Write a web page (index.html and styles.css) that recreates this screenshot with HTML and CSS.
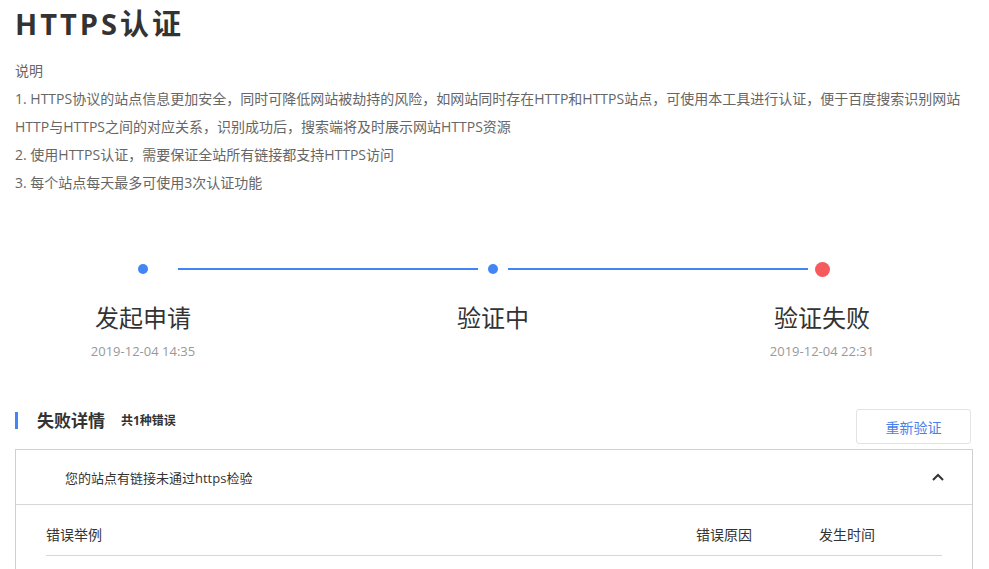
FILE: index.html
```html
<!DOCTYPE html>
<html lang="zh-CN">
<head>
<meta charset="utf-8">
<title>HTTPS认证</title>
<link rel="stylesheet" href="styles.css">
</head>
<body>
<div class="page">
  <h1 class="title">HTTPS认证</h1>
  <div class="desc">
    <p>说明</p>
    <p>1. HTTPS协议的站点信息更加安全，同时可降低网站被劫持的风险，如网站同时存在HTTP和HTTPS站点，可使用本工具进行认证，便于百度搜索识别网站HTTP与HTTPS之间的对应关系，识别成功后，搜索端将及时展示网站HTTPS资源</p>
    <p>2. 使用HTTPS认证，需要保证全站所有链接都支持HTTPS访问</p>
    <p>3. 每个站点每天最多可使用3次认证功能</p>
  </div>

  <div class="track">
    <span class="dot"></span>
    <span class="line line-1"></span>
    <span class="dot"></span>
    <span class="line line-2"></span>
    <span class="dot dot-fail"></span>
  </div>
  <div class="steps">
    <div class="step step-1">
      <div class="step-name">发起申请</div>
      <div class="step-time">2019-12-04 14:35</div>
    </div>
    <div class="step step-2">
      <div class="step-name">验证中</div>
      <div class="step-time"></div>
    </div>
    <div class="step step-3">
      <div class="step-name">验证失败</div>
      <div class="step-time">2019-12-04 22:31</div>
    </div>
  </div>

  <div class="section-head">
    <div class="section-title"><span class="st-main">失败详情</span><span class="st-sub">共1种错误</span></div>
    <button class="btn">重新验证</button>
  </div>

  <div class="panel">
    <div class="panel-head">
      <span class="panel-title">您的站点有链接未通过https检验</span>
      <svg class="chev" width="12" height="8" viewBox="0 0 12 8"><polyline points="1,7 6,2 11,7" fill="none" stroke="#333" stroke-width="2"/></svg>
    </div>
    <div class="panel-body">
      <div class="thead">
        <div class="col col-a">错误举例</div>
        <div class="col col-b">错误原因</div>
        <div class="col col-c">发生时间</div>
      </div>
    </div>
  </div>
</div>
</body>
</html>
```

FILE: styles.css
```css
html, body {
  margin: 0;
  padding: 0;
  background: #fff;
}
body {
  font-family: "Open Sans", "Noto Sans CJK SC", sans-serif;
  color: #333;
}
.page {
  padding: 0 16px 0 15px;
}
.title {
  margin: 0;
  font-size: 29px;
  line-height: 48px;
  font-weight: bold;
  letter-spacing: 3px;
  color: #333;
}
.desc {
  margin-top: 9px;
  font-size: 14px;
  line-height: 28px;
  color: #666;
}
.desc p {
  margin: 0;
}
.track {
  margin-top: 64px;
  height: 16px;
  display: flex;
  align-items: center;
  padding-left: 123px;
}
.dot {
  width: 10px;
  height: 10px;
  border-radius: 50%;
  background: #4285f4;
  flex: none;
}
.dot-fail {
  width: 15px;
  height: 15px;
  background: #f55b5d;
  margin-left: 7px;
}
.line {
  width: 300px;
  height: 2px;
  background: #4285f4;
  flex: none;
}
.line-1 {
  margin: 0 10px 0 30px;
}
.line-2 {
  margin-left: 10px;
}
.steps {
  display: flex;
  margin-top: 24px;
}
.step {
  width: 200px;
  text-align: center;
  flex: none;
}
.step-1 { margin-left: 28px; }
.step-2 { margin-left: 150px; }
.step-3 { margin-left: 129px; }
.step-name {
  font-size: 24px;
  line-height: 34px;
  color: #333;
}
.step-time {
  margin-top: 6px;
  height: 20px;
  font-size: 13px;
  line-height: 20px;
  color: #999;
}
.section-head {
  margin-top: 48px;
  display: flex;
  justify-content: space-between;
  align-items: flex-start;
  margin-bottom: 5px;
}
.section-title {
  margin-top: 3px;
  height: 17px;
  border-left: 3px solid #4285f4;
  padding-left: 19px;
  display: flex;
  align-items: center;
}
.st-main {
  font-size: 17px;
  font-weight: bold;
  line-height: 17px;
  color: #333;
}
.st-sub {
  margin-left: 16px;
  font-size: 12px;
  font-weight: bold;
  line-height: 17px;
  color: #333;
}
.btn {
  width: 115px;
  height: 35px;
  margin-right: 2px;
  border: 1px solid #e3e3e3;
  border-radius: 3px;
  background: #fff;
  color: #4a80e8;
  font-family: inherit;
  font-size: 14px;
  padding: 0;
  cursor: pointer;
}
.panel {
  border: 1px solid #d0d0d0;
  border-bottom: none;
}
.panel-head {
  height: 54px;
  border-bottom: 1px solid #d8d8d8;
  display: flex;
  align-items: center;
  justify-content: space-between;
  padding: 0 28px 0 49px;
}
.panel-title {
  font-size: 13px;
  color: #333;
}
.chev {
  display: block;
}
.panel-body {
  padding: 0 30px;
  height: 80px;
}
.thead {
  display: flex;
  padding-top: 20px;
  padding-bottom: 10px;
  border-bottom: 1px solid #d8d8d8;
  font-size: 14px;
  line-height: 20px;
  color: #333;
}
.col-a { width: 650px; }
.col-b { width: 123px; }
.col-c { flex: 1; }
```
